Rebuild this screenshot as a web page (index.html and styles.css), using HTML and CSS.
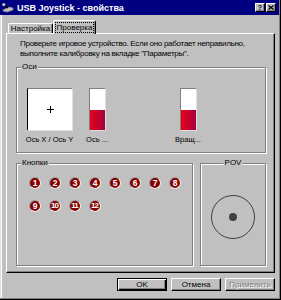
FILE: index.html
```html
<!DOCTYPE html>
<html lang="ru">
<head>
  <meta charset="UTF-8" />
  <title>USB Joystick - свойства</title>
  <link rel="stylesheet" href="styles.css">
</head>
<body>
  <div class="window">
    <div class="titlebar">
      <svg class="app-icon" width="12" height="11" viewBox="0 0 12 11">
        <path d="M1 8 L7 5 L11 6 L11 8 L5 10 L1 9 Z" fill="#c0c0c0" stroke="#808080" stroke-width="0.8"/>
        <path d="M1 3 L6 6" stroke="#000" stroke-width="1.4"/>
        <circle cx="1.8" cy="2.6" r="1.6" fill="#c0c0c0"/>
      </svg>
      <span class="title">USB Joystick - свойства</span>
      <div class="caption-buttons">
        <span class="cap-btn">?</span>
        <span class="cap-btn">
          <svg width="6" height="5" viewBox="0 0 6 5"><path d="M0.5 0.5 L5.5 4.5 M5.5 0.5 L0.5 4.5" stroke="#000" stroke-width="1.3"/></svg>
        </span>
      </div>
    </div>

    <div class="content">
      <div class="tabs">
        <div class="tab">Настройка</div>
        <div class="tab active"><span class="focus">Проверка</span></div>
      </div>

      <div class="panel">
        <p class="hint">Проверьте игровое устройство. Если оно работает неправильно,<br>выполните калибровку на вкладке "Параметры".</p>

        <div class="group axes">
          <span class="group-title">Оси</span>
          <div class="axis">
            <div class="xy-box">
              <svg width="7" height="7" viewBox="0 0 7 7"><path d="M3.5 0 V7 M0 3.5 H7" stroke="#000" stroke-width="1"/></svg>
            </div>
            <span class="axis-label">Ось X / Ось Y</span>
          </div>
          <div class="axis narrow">
            <div class="bar"><div class="bar-fill" style="height: 48%"></div></div>
            <span class="axis-label">Ось ...</span>
          </div>
          <div class="axis narrow rot">
            <div class="bar"><div class="bar-fill" style="height: 48%"></div></div>
            <span class="axis-label">Вращ...</span>
          </div>
        </div>

        <div class="lower">
          <div class="group buttons">
            <span class="group-title">Кнопки</span>
            <div class="button-grid">
              <span class="jbtn">1</span>
              <span class="jbtn">2</span>
              <span class="jbtn">3</span>
              <span class="jbtn">4</span>
              <span class="jbtn">5</span>
              <span class="jbtn">6</span>
              <span class="jbtn">7</span>
              <span class="jbtn">8</span>
              <span class="jbtn">9</span>
              <span class="jbtn two">10</span>
              <span class="jbtn two">11</span>
              <span class="jbtn two">12</span>
            </div>
          </div>
          <div class="group pov">
            <span class="group-title centered">POV</span>
            <div class="pov-ring"><div class="pov-dot"></div></div>
          </div>
        </div>
      </div>

      <div class="actions">
        <button class="btn default">OK</button>
        <button class="btn">Отмена</button>
        <button class="btn" disabled>Применить</button>
      </div>
    </div>
  </div>
</body>
</html>
```

FILE: styles.css
```css
*,
*::before,
*::after {
  box-sizing: border-box;
}

body {
  margin: 0;
  font-family: 'Liberation Sans', Arial, sans-serif;
  font-size: 8px;
  color: #000;
  background: #c0c0c0;
}

.window {
  width: 281px;
  height: 300px;
  background: #c0c0c0;
  box-shadow: inset -1px -1px 0 #000, inset -2px -2px 0 #808080, inset 1px 0 0 #dfdfdf, inset 2px 0 0 #fff;
}

/* title bar */
.titlebar {
  height: 15px;
  margin-right: 2px;
  background: #000080;
  display: flex;
  align-items: center;
  padding: 0 3px 0 2px;
}

.app-icon {
  flex: none;
  margin-right: 3px;
}

.title {
  color: #fff;
  font-weight: bold;
  font-size: 9px;
  line-height: 10px;
  flex: 1;
  white-space: nowrap;
}

.caption-buttons {
  display: flex;
  gap: 1px;
}

.cap-btn {
  width: 10px;
  height: 9px;
  background: #c0c0c0;
  border: 1px solid;
  border-color: #fff #000 #000 #fff;
  box-shadow: inset -1px -1px 0 #808080;
  display: flex;
  align-items: center;
  justify-content: center;
  font-weight: bold;
  font-size: 7px;
  line-height: 7px;
}

/* dialog body */
.content {
  padding: 0 6px;
}

.tabs {
  display: flex;
  align-items: flex-end;
  height: 13px;
  margin-top: 5px;
  padding-left: 2px;
}

.tab {
  width: 45px;
  height: 10px;
  border: 1px solid;
  border-bottom: none;
  border-color: #fff #000 #000 #fff;
  border-radius: 2px 2px 0 0;
  box-shadow: inset -1px 0 0 #808080;
  display: flex;
  align-items: center;
  justify-content: center;
  line-height: 9px;
  white-space: nowrap;
}

.tab.active {
  position: relative;
  z-index: 1;
  width: 43px;
  height: 14px;
  margin-bottom: -1px;
  background: #c0c0c0;
}

.focus {
  outline: 1px dotted #000;
  outline-offset: 0;
  padding: 0 1px;
  line-height: 9px;
}

.panel {
  height: 240px;
  border: 1px solid;
  border-color: #fff #000 #000 #fff;
  box-shadow: inset -1px -1px 0 #808080;
  padding: 0 8px 0 9px;
}

.hint {
  margin: 5px 0 0 4px;
  line-height: 10px;
  letter-spacing: -0.28px;
  white-space: nowrap;
}

/* group boxes */
.group {
  position: relative;
  border: 1px solid #808080;
  box-shadow: 1px 1px 0 #fff, inset 1px 1px 0 #fff;
}

.group-title {
  position: absolute;
  top: -6px;
  left: 4px;
  padding: 0 1px;
  line-height: 10px;
  background: #c0c0c0;
}

.group-title.centered {
  left: 50%;
  transform: translateX(-50%);
}

.axes {
  height: 86px;
  margin-top: 8px;
  display: flex;
  padding: 20px 0 0 10px;
}

.axis {
  display: flex;
  flex-direction: column;
  align-items: center;
  width: 45px;
}

.axis.narrow {
  width: 24px;
  margin-left: 13px;
}

.axis.rot {
  margin-left: 67px;
}

.xy-box {
  width: 45px;
  height: 42px;
  background: #fff;
  border-left: 1px solid #000;
  border-top: 1px solid #808080;
  box-shadow: 1px 1px 0 #dfdfdf;
  display: flex;
  align-items: center;
  justify-content: center;
}

.bar {
  width: 16px;
  height: 42px;
  background: #fff;
  border-left: 1px solid #808080;
  border-top: 1px solid #808080;
  box-shadow: 1px 1px 0 #dfdfdf;
  display: flex;
  flex-direction: column;
  justify-content: flex-end;
}

.bar-fill {
  background: linear-gradient(to right, #e8001c, #a4003c);
}

.axis-label {
  margin-top: 5px;
  line-height: 10px;
  font-size: 7.5px;
  white-space: nowrap;
}

.lower {
  display: flex;
  gap: 7px;
  margin-top: 10px;
}

.buttons {
  width: 177px;
  height: 103px;
  padding: 13px 0 0 12px;
}

.button-grid {
  display: grid;
  grid-template-columns: repeat(8, 12px);
  column-gap: 8px;
  row-gap: 11px;
}

.jbtn {
  width: 12px;
  height: 12px;
  border-radius: 50%;
  background: #860000;
  border: 1px solid;
  border-color: #a0a0a0 #f4f4f4 #f4f4f4 #a0a0a0;
  color: #fff;
  font-weight: bold;
  font-size: 8.5px;
  line-height: 10px;
  text-align: center;
}

.jbtn.two {
  letter-spacing: -1px;
  text-indent: -1px;
  font-size: 8px;
}

.pov {
  width: 66px;
  height: 103px;
  display: flex;
  justify-content: center;
  padding-top: 31px;
}

.pov-ring {
  width: 44px;
  height: 44px;
  border: 1px solid #404040;
  border-radius: 50%;
  display: flex;
  align-items: center;
  justify-content: center;
}

.pov-dot {
  width: 8px;
  height: 8px;
  border-radius: 50%;
  background: #404040;
}

/* dialog buttons */
.actions {
  display: flex;
  justify-content: flex-end;
  gap: 4px;
  margin-top: 5px;
}

.btn {
  width: 50px;
  height: 13px;
  padding: 0;
  background: #c0c0c0;
  border: 1px solid;
  border-color: #fff #000 #000 #fff;
  box-shadow: inset -1px -1px 0 #808080;
  font-family: inherit;
  font-size: 8px;
  line-height: 10px;
  color: #000;
}

.btn.default {
  border-color: #000;
  box-shadow: inset 1px 1px 0 #fff, inset -1px -1px 0 #000, inset -2px -2px 0 #808080;
}

.btn:disabled {
  color: #808080;
  text-shadow: 1px 1px 0 #fff;
}
```
